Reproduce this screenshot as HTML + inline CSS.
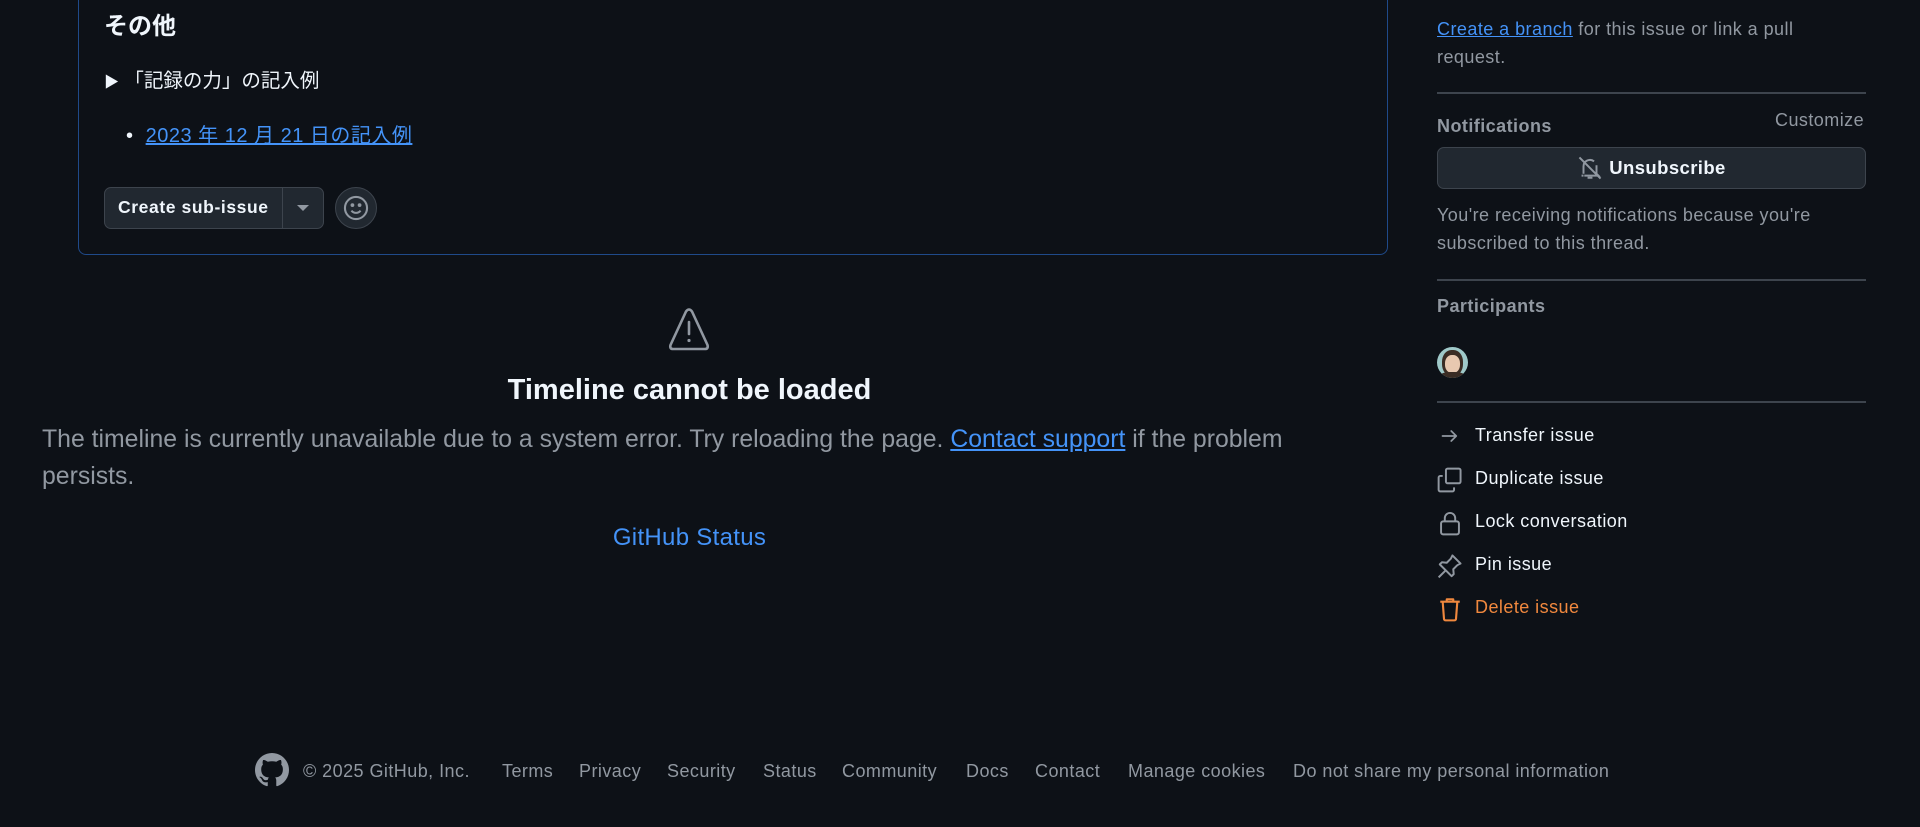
<!DOCTYPE html>
<html><head><meta charset="utf-8"><style>
*{margin:0;padding:0;box-sizing:border-box}
body{width:1920px;height:827px;background:#0d1117;color:#f0f6fc;font-family:"Liberation Sans","Noto Sans CJK JP",sans-serif;position:relative;overflow:hidden}
.a{position:absolute;white-space:nowrap}
a{color:#4493f8}
.m{color:#9198a1}
.s{font-size:18px;letter-spacing:0.45px}
.hr{position:absolute;left:1437px;width:429px;height:2px;background:#3d444d}
svg{display:block}
</style></head><body>
<div class="a" style="left:78px;top:-10px;width:1310px;height:265px;border:1.5px solid #1f4a8a;border-radius:8px"></div>
<div class="a" style="left:104px;top:6px;font-size:24px;font-weight:bold">その他</div>
<div class="a" style="left:104px;top:64px;font-size:19.5px"><span style="font-size:15px">▶</span>&nbsp;「記録の力」の記入例</div>
<div class="a" style="left:126px;top:119px;font-size:20px;letter-spacing:0.5px">•&nbsp;&nbsp;<a href="#" style="text-decoration:underline">2023 年 12 月 21 日の記入例</a></div>
<div class="a" style="left:104px;top:187px;width:220px;height:42px;border:1.5px solid #3d444d;border-radius:7px;background:#212830;display:flex">
<div style="width:178px;border-right:1.5px solid #3d444d;font-size:17.5px;letter-spacing:0.6px;font-weight:bold;line-height:39px;padding-left:13px">Create sub-issue</div>
<div style="flex:1;display:flex;align-items:center;justify-content:center"><div style="width:0;height:0;border-left:6px solid transparent;border-right:6px solid transparent;border-top:6px solid #9198a1"></div></div></div>
<div class="a" style="left:335px;top:187px;width:42px;height:42px;border:1.5px solid #3d444d;border-radius:50%;background:#212830;display:flex;align-items:center;justify-content:center">
<svg width="26" height="26" viewBox="0 0 16 16" fill="none" stroke="#9198a1" stroke-width="1.3"><circle cx="8" cy="8" r="6.8"/><path d="M5.2 9.6c.7.9 1.7 1.4 2.8 1.4s2.1-.5 2.8-1.4"/><circle cx="5.8" cy="6.2" r=".5" fill="#9198a1"/><circle cx="10.2" cy="6.2" r=".5" fill="#9198a1"/></svg></div>

<svg class="a" style="left:668px;top:307px" width="42" height="45" viewBox="0 0 42 45" fill="none" stroke="#9198a1" stroke-width="2.6" stroke-linejoin="round"><path d="M18 4.5 Q21 0.5 24 4.5 L39.5 38 Q40.5 42 37 42 L5 42 Q1.5 42 2.5 38 Z"/><path d="M21 15v12" stroke-linecap="round"/><circle cx="21" cy="33.5" r="1.6" fill="#9198a1" stroke="none"/></svg>
<div class="a" style="left:0;width:1379px;top:374px;text-align:center;font-size:29px;font-weight:bold">Timeline cannot be loaded</div>
<div class="a m" style="left:42px;top:421px;font-size:24.8px;line-height:37px;white-space:normal;width:1300px">The timeline is currently unavailable due to a system error. Try reloading the page. <a href="#" style="text-decoration:underline">Contact support</a> if the problem persists.</div>
<div class="a" style="left:0;width:1379px;top:524px;text-align:center;font-size:24px;letter-spacing:0.3px;color:#4493f8">GitHub Status</div>

<div class="a m s" style="left:1437px;top:15px;line-height:28px;white-space:normal;width:400px"><a href="#" style="text-decoration:underline">Create a branch</a> for this issue or link a pull request.</div>
<div class="hr" style="top:92px"></div>
<div class="a m s" style="left:1437px;top:116px;font-weight:bold">Notifications</div>
<div class="a m s" style="left:1775px;top:110px">Customize</div>
<div class="a" style="left:1437px;top:147px;width:429px;height:42px;border:1.5px solid #3d444d;border-radius:7px;background:#212830;display:flex;align-items:center;justify-content:center;font-size:18.5px;letter-spacing:0.4px;font-weight:bold">
<svg width="26" height="26" viewBox="0 0 16 16" fill="none" stroke="#9198a1" stroke-width="1.2" style="margin-right:6px"><path d="M4 11.5V7a4 4 0 0 1 6.5-3.1M12 6.3V11.5l1.2 1.2H4.5M2.8 12.7h1.2M6.5 14h3M1.5 1.5l13 13"/></svg>Unsubscribe</div>
<div class="a m s" style="left:1437px;top:201px;line-height:28px;white-space:normal;width:420px">You're receiving notifications because you're subscribed to this thread.</div>
<div class="hr" style="top:279px"></div>
<div class="a m s" style="left:1437px;top:296px;font-weight:bold">Participants</div>
<div class="a" style="left:1437px;top:347px;width:31px;height:31px;border-radius:50%;background:#9fc9c9;overflow:hidden">
<div style="position:absolute;left:5px;top:3px;width:21px;height:26px;border-radius:45%;background:#3a2c24"></div>
<div style="position:absolute;left:8px;top:8px;width:15px;height:18px;border-radius:45%;background:#e8c8b0"></div>
<div style="position:absolute;left:3px;top:25px;width:25px;height:10px;border-radius:40%;background:#3a2c24"></div></div>
<div class="hr" style="top:401px"></div>

<svg class="a" style="left:1440px;top:426px" width="20" height="20" viewBox="0 0 16 16" fill="none" stroke="#9198a1" stroke-width="1.4" stroke-linecap="round" stroke-linejoin="round"><path d="M2 8h11M9 4l4 4-4 4"/></svg>
<div class="a s" style="left:1475px;top:425px">Transfer issue</div>
<svg class="a" style="left:1437px;top:467px" width="26" height="26" viewBox="0 0 16 16" fill="none" stroke="#9198a1" stroke-width="1.2" stroke-linejoin="round"><rect x="5.5" y="1" width="9" height="9" rx="1"/><path d="M3.5 5.5H2a1 1 0 0 0-1 1V14a1 1 0 0 0 1 1h7.5a1 1 0 0 0 1-1v-1.5"/></svg>
<div class="a s" style="left:1475px;top:468px">Duplicate issue</div>
<svg class="a" style="left:1437px;top:510px" width="26" height="26" viewBox="0 0 16 16" fill="none" stroke="#9198a1" stroke-width="1.2"><rect x="2.5" y="7" width="11" height="8" rx="1.3"/><path d="M4.8 7V5a3.2 3.2 0 0 1 6.4 0v2"/></svg>
<div class="a s" style="left:1475px;top:511px">Lock conversation</div>
<svg class="a" style="left:1437px;top:553px" width="26" height="26" viewBox="0 0 16 16" fill="none" stroke="#9198a1" stroke-width="1.2" stroke-linejoin="round"><path d="M9.5 1.5l5 5-2 1-2.5 2.5.3 3L9 14.3 1.7 7 3 5.7l3 .3L8.5 3.5z"/><path d="M5.3 10.7L1 15"/></svg>
<div class="a s" style="left:1475px;top:554px">Pin issue</div>
<svg class="a" style="left:1437px;top:596px" width="26" height="26" viewBox="0 0 16 16" fill="none" stroke="#f0883e" stroke-width="1.3" stroke-linejoin="round"><path d="M2 3.5h12M6 3.5V2h4v1.5M3.5 3.5l.8 10.5a1 1 0 0 0 1 1h5.4a1 1 0 0 0 1-1l.8-10.5"/></svg>
<div class="a s" style="left:1475px;top:597px;color:#f0883e">Delete issue</div>

<svg class="a" style="left:255px;top:753px" width="34" height="34" viewBox="0 0 16 16" fill="#9198a1"><path d="M8 0C3.58 0 0 3.58 0 8c0 3.54 2.29 6.53 5.47 7.59.4.07.55-.17.55-.38 0-.19-.01-.82-.01-1.49-2.01.37-2.530-.49-2.690-.94-.09-.23-.48-.94-.82-1.13-.28-.15-.68-.52-.01-.53.63-.01 1.08.58 1.23.82.72 1.21 1.87.87 2.33.66.07-.52.28-.87.51-1.070-1.78-.2-3.640-.89-3.640-3.950 0-.87.31-1.59.82-2.150-.08-.2-.36-1.020.08-2.120 0 0 .67-.21 2.2.82.64-.18 1.32-.27 2-.27.68 0 1.36.09 2 .27 1.53-1.04 2.2-.82 2.2-.82.44 1.1.16 1.92.08 2.12.51.56.82 1.27.82 2.15 0 3.07-1.87 3.75-3.65 3.95.29.25.54.73.54 1.48 0 1.07-.01 1.93-.01 2.2 0 .21.15.46.55.38A8.013 8.013 0 0016 8c0-4.42-3.58-8-8-8z"/></svg>
<div class="a m s" style="left:303px;top:761px">© 2025 GitHub, Inc.</div>
<div class="a m s" style="left:502px;top:761px">Terms</div>
<div class="a m s" style="left:579px;top:761px">Privacy</div>
<div class="a m s" style="left:667px;top:761px">Security</div>
<div class="a m s" style="left:763px;top:761px">Status</div>
<div class="a m s" style="left:842px;top:761px">Community</div>
<div class="a m s" style="left:966px;top:761px">Docs</div>
<div class="a m s" style="left:1035px;top:761px">Contact</div>
<div class="a m s" style="left:1128px;top:761px">Manage cookies</div>
<div class="a m s" style="left:1293px;top:761px">Do not share my personal information</div>
</body></html>
